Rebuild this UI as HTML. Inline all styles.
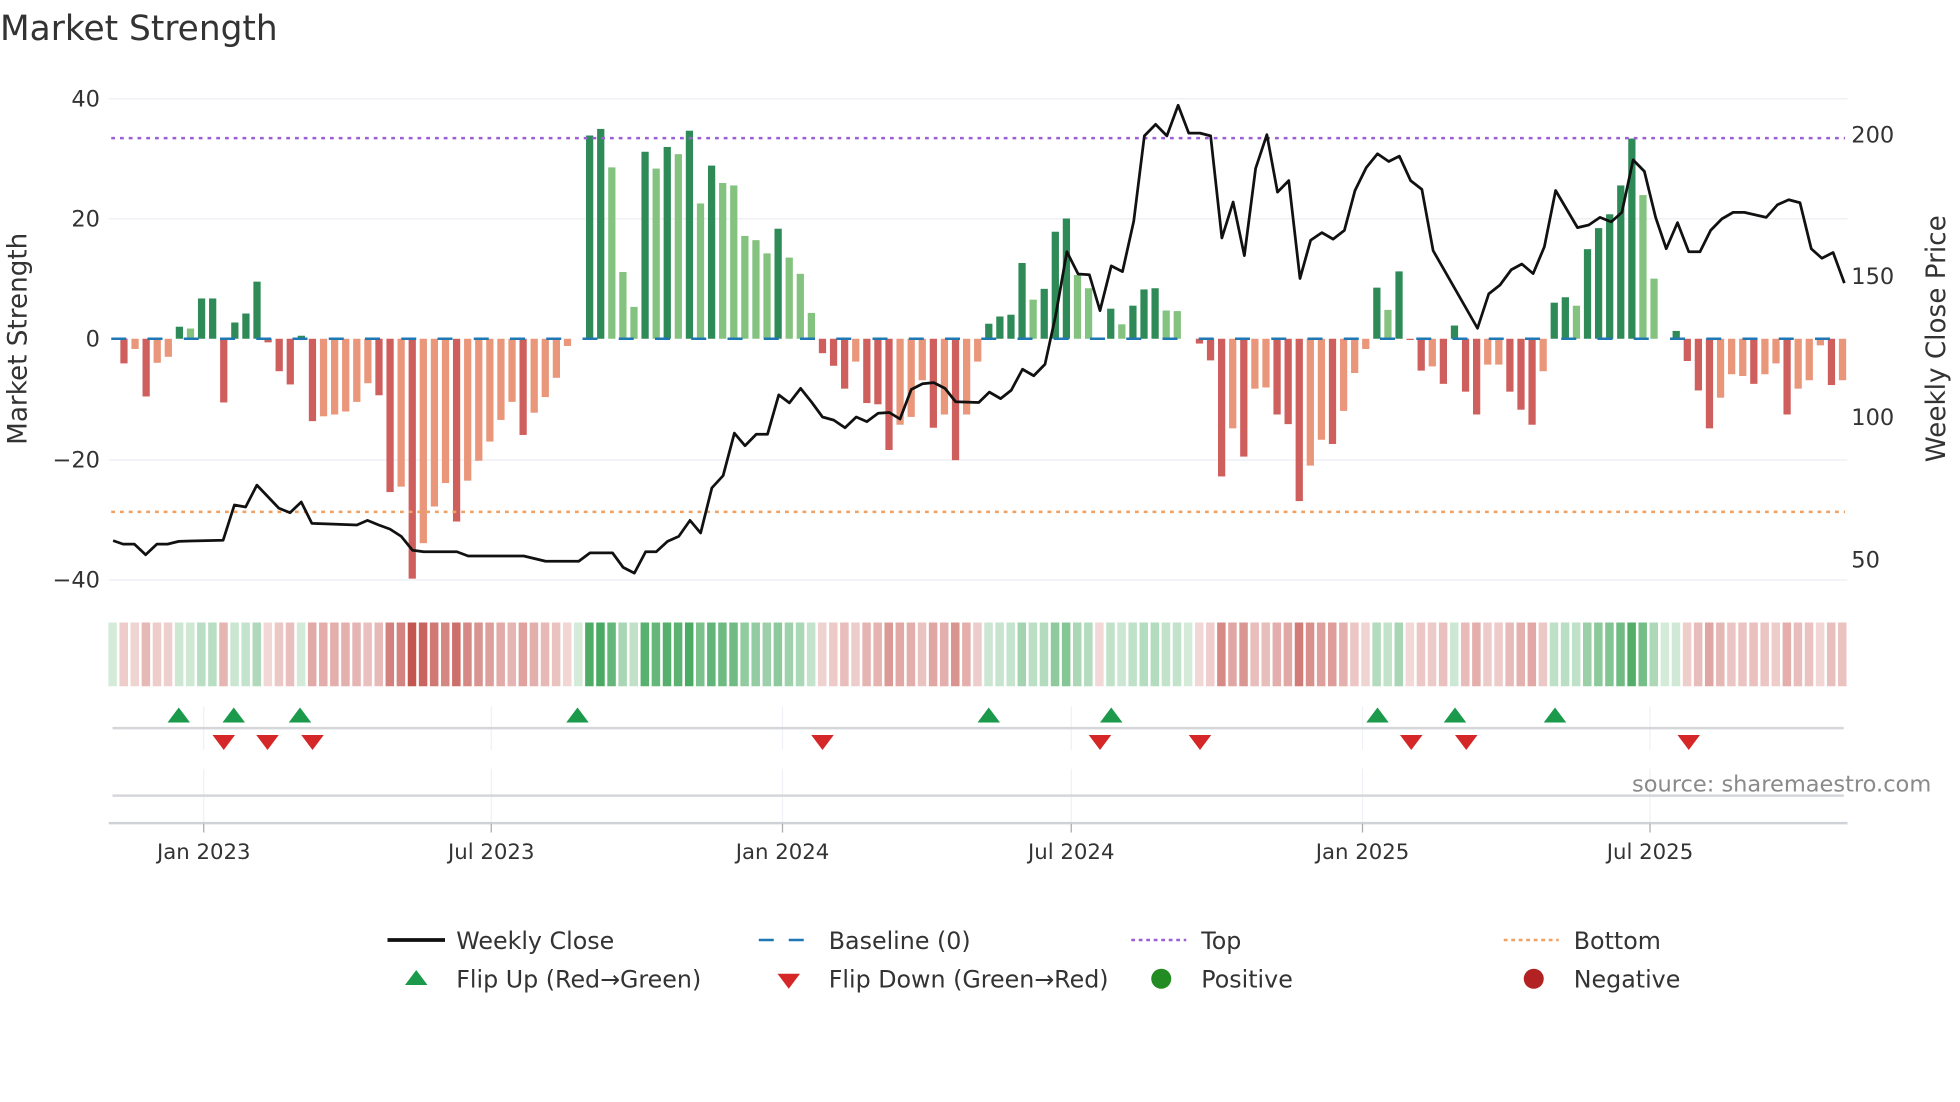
<!DOCTYPE html>
<html><head><meta charset="utf-8"><style>
html,body{margin:0;padding:0;background:#fff;width:1960px;height:1102px;overflow:hidden}
svg{display:block}
text{font-family:"DejaVu Sans","Liberation Sans",sans-serif}
</style></head><body>
<svg id="s" width="1960" height="1102" viewBox="0 0 1568 881.6" xmlns="http://www.w3.org/2000/svg">
<text x="0" y="32" font-size="27.5" fill="#333">Market Strength</text>
<g stroke="#eceef2" stroke-width="1">
<line x1="87" x2="1478" y1="79" y2="79"/><line x1="87" x2="1478" y1="175" y2="175"/>
<line x1="87" x2="1478" y1="368" y2="368"/><line x1="87" x2="1478" y1="464" y2="464"/>
</g>
<g font-size="18" fill="#333" text-anchor="end">
<text x="80" y="85">40</text><text x="80" y="181">20</text><text x="80" y="277">0</text>
<text x="80" y="374">−20</text><text x="80" y="470">−40</text>
</g>
<g font-size="18" fill="#333">
<text x="1481" y="114">200</text><text x="1481" y="227">150</text><text x="1481" y="340">100</text><text x="1481" y="454">50</text>
</g>
<text transform="translate(21,271) rotate(-90)" font-size="21" fill="#333" text-anchor="middle">Market Strength</text>
<text transform="translate(1556,271) rotate(-90)" font-size="21" fill="#333" text-anchor="middle">Weekly Close Price</text>
<g id="bars"></g>
<line x1="89" x2="1476" y1="271" y2="271" stroke="#1f77b4" stroke-width="2" stroke-dasharray="12,17"/>
<line x1="89" x2="1476" y1="110.5" y2="110.5" stroke="#9b5fd6" stroke-width="2" stroke-dasharray="3,4"/>
<line x1="89" x2="1476" y1="409.5" y2="409.5" stroke="#f0a060" stroke-width="2" stroke-dasharray="3,4"/>
<polyline id="price" fill="none" stroke="#111" stroke-width="2.2" stroke-linejoin="round"/>
<g id="heat"></g>
<g stroke="#eef1f5" stroke-width="1">
<line x1="163" x2="163" y1="565" y2="600"/><line x1="393" x2="393" y1="565" y2="600"/><line x1="626" x2="626" y1="565" y2="600"/><line x1="857" x2="857" y1="565" y2="600"/><line x1="1090" x2="1090" y1="565" y2="600"/><line x1="1320" x2="1320" y1="565" y2="600"/>
<line x1="163" x2="163" y1="615" y2="658"/><line x1="393" x2="393" y1="615" y2="658"/><line x1="626" x2="626" y1="615" y2="658"/><line x1="857" x2="857" y1="615" y2="658"/><line x1="1090" x2="1090" y1="615" y2="658"/><line x1="1320" x2="1320" y1="615" y2="658"/>
</g>
<line x1="90" x2="1475" y1="582.5" y2="582.5" stroke="#d4d6da" stroke-width="2"/>
<line x1="90" x2="1475" y1="636.5" y2="636.5" stroke="#d4d6da" stroke-width="2"/>
<line x1="87" x2="1478" y1="658.5" y2="658.5" stroke="#cfd2d6" stroke-width="2"/>
<g stroke="#aaa" stroke-width="1">
<line x1="163" x2="163" y1="659" y2="666"/><line x1="393" x2="393" y1="659" y2="666"/><line x1="626" x2="626" y1="659" y2="666"/><line x1="857" x2="857" y1="659" y2="666"/><line x1="1090" x2="1090" y1="659" y2="666"/><line x1="1320" x2="1320" y1="659" y2="666"/>
</g>
<g id="tri"></g>
<text x="1545" y="633" font-size="18" fill="#8a8a8a" text-anchor="end">source: sharemaestro.com</text>
<g font-size="17" fill="#333" text-anchor="middle">
<text x="163" y="687">Jan 2023</text><text x="393" y="687">Jul 2023</text><text x="626" y="687">Jan 2024</text><text x="857" y="687">Jul 2024</text><text x="1090" y="687">Jan 2025</text><text x="1320" y="687">Jul 2025</text>
</g>
<g font-size="19" fill="#333">
<line x1="310" x2="356" y1="752" y2="752" stroke="#111" stroke-width="3"/><text x="365" y="759">Weekly Close</text>
<line x1="607" x2="651" y1="752" y2="752" stroke="#1f77b4" stroke-width="2" stroke-dasharray="12,12"/><text x="663" y="759">Baseline (0)</text>
<line x1="905" x2="949" y1="752" y2="752" stroke="#9b5fd6" stroke-width="2" stroke-dasharray="3,3"/><text x="961" y="759">Top</text>
<line x1="1203" x2="1247" y1="752" y2="752" stroke="#f0a060" stroke-width="2" stroke-dasharray="3,3"/><text x="1259" y="759">Bottom</text>
<polygon points="324,788 342,788 333,776" fill="#1a9a4a"/><text x="365" y="790">Flip Up (Red→Green)</text>
<polygon points="622,779 640,779 631,791" fill="#d62728"/><text x="663" y="790">Flip Down (Green→Red)</text>
<circle cx="929" cy="783" r="8" fill="#228b22"/><text x="961" y="790">Positive</text>
<circle cx="1227" cy="783" r="8" fill="#b22222"/><text x="1259" y="790">Negative</text>
</g>
</svg>
<script>
var NS="http://www.w3.org/2000/svg";
var v=[0,"-4.1d","-1.7l","-9.6d","-4l","-3l","2d","1.7l","6.7d","6.7d","-10.6d","2.7d","4.2d","9.5d","-0.6d","-5.4d","-7.6d","0.5d","-13.7d","-12.9l","-12.6l","-12.1l","-10.5l","-7.4l","-9.4d","-25.5d","-24.6l","-39.9d","-34l","-27.9l","-24l","-30.4d","-23.6l","-20.3l","-17.1l","-13.5l","-10.5l","-16d","-12.3l","-9.7l","-6.5l","-1.2l","0l","33.8d","34.9d","28.5l","11.1l","5.3l","31.1d","28.3l","31.9d","30.7l","34.6d","22.5l","28.8d","25.9l","25.5l","17.1l","16.4l","14.2l","18.3d","13.5l","10.8l","4.3l","-2.4d","-4.5d","-8.3d","-3.8l","-10.7d","-10.9d","-18.5d","-14.3l","-13l","-6.9l","-14.8d","-12.6l","-20.2d","-12.6l","-3.8l",
"2.5d","3.7d","4d","12.6d","6.5l","8.3d","17.8d","20d","10.6l","8.4l","-0.2d","5d","2.4l","5.5d","8.2d","8.4d","4.7l","4.6l","0l","-0.8d","-3.6d","-22.9d","-14.9l","-19.6d","-8.3l","-8.1l","-12.6d","-14.2d","-27d","-21.1l","-16.8l","-17.5d","-12l","-5.7l","-1.7l","8.5d","4.8l","11.2d","-0.2d","-5.3d","-4.6l","-7.5d","2.2d","-8.8d","-12.6d","-4.3l","-4.3l","-8.8d","-11.8d","-14.3d","-5.4l","6d","6.9d","5.5l","14.9d","18.4d","20.7d","25.5d","33.3d","23.9l","10l","0l","1.3d","-3.7d","-8.6d","-14.9d","-9.8l","-5.9l","-6.2l","-7.5d","-5.9l","-4.1l","-12.6d","-8.3l","-6.9l","-1.1l","-7.7d","-6.9l"];
var bars=document.getElementById("bars"),heat=document.getElementById("heat");
function mix(c,t){return "rgb("+c.map(function(x){return Math.round(255+(x-255)*t)}).join(",")+")";}
for(var i=0;i<v.length;i++){
 var s=""+v[i],val=parseFloat(s),d=s.indexOf("d")>=0,x=90.3+i*8.87;
 if(Math.abs(val)>0.05){
  var r=document.createElementNS(NS,"rect");
  var h=Math.abs(val)*4.81;
  r.setAttribute("x",x-2.9);r.setAttribute("width",5.8);
  r.setAttribute("y",val>0?271-h:271);r.setAttribute("height",h);
  r.setAttribute("fill",val>0?(d?"#2e8a56":"#84c27f"):(d?"#cf5f5d":"#e9967a"));
  bars.appendChild(r);}
 var t=0.22+0.78*Math.min(1,Math.abs(val)/38);
 var c=val>=0?mix([62,164,88],t):mix([196,86,80],t);
 var hr=document.createElementNS(NS,"rect");
 hr.setAttribute("x",x-3.6);hr.setAttribute("width",6.8);hr.setAttribute("y",498);hr.setAttribute("height",51);hr.setAttribute("fill",c);
 heat.appendChild(hr);
}
var p1=[181,1413,197,1422,215,1422,233,1450,251,1422,268,1422,286,1415,304,1414,357,1412,375,1320,393,1325,411,1268,446,1328,464,1340,482,1312,499,1368,517,1369,571,1372,588,1360,606,1372,624,1383,642,1402,660,1438,678,1442,731,1442,749,1453,838,1453,873,1467,926,1467,944,1445,980,1445,997,1483,1015,1498,1033,1442,1050,1442,1068,1415,1086,1402,1104,1360,1121,1393,1139,1275,1157,1243,1175,1132,1192,1165,1210,1135,1228,1135,1246,1032,1263,1053,1281,1015,1299,1052,1316,1090,1334,1098,1352,1118,1370,1090,1387,1102,1405,1080,1423,1078,1440,1095,1458,1018,1476,1003,1494,1000,1512,1015,1529,1050,1566,1052];
var p2=[15,1025,33,1042,50,1020,68,965,86,982,104,952,121,825,139,658,157,716,175,718,192,812,210,695,228,710,246,578,263,355,281,325,299,355,317,275,334,348,352,348,369,355,387,622,405,528,423,668,441,440,459,352,476,502,494,472,512,728,529,628,547,608,565,625,583,602,600,498,618,438,636,402,654,422,671,408,689,472,707,495,725,655,796,858,814,768,832,745,850,705,867,690,885,715,903,645,921,498,956,595,974,588,992,568,1010,580,1027,555,1045,418,1063,448,1081,568,1098,650,1116,582,1134,658,1152,658,1169,602,1187,572,1205,555,1223,555,1258,568,1276,535,1294,522,1312,530,1330,650,1347,675,1365,660,1383,740];
var pts=[];
for(var k=0;k<p1.length;k+=2)pts.push((p1[k]/2).toFixed(1)+","+(p1[k+1]/3.267).toFixed(1));
for(var k=0;k<p2.length;k+=2)pts.push((784+p2[k]/2).toFixed(1)+","+(p2[k+1]/3.267).toFixed(1));
document.getElementById("price").setAttribute("points",pts.join(" "));
var tri=document.getElementById("tri");
[143,187,240,462,791,889,1102,1164,1244].forEach(function(x){var p=document.createElementNS(NS,"polygon");p.setAttribute("points",(x-9)+",578 "+(x+9)+",578 "+x+",566");p.setAttribute("fill","#1a9a4a");tri.appendChild(p);});
[179,214,250,658,880,960,1129,1173,1351].forEach(function(x){var p=document.createElementNS(NS,"polygon");p.setAttribute("points",(x-9)+",588 "+(x+9)+",588 "+x+",600");p.setAttribute("fill","#d62728");tri.appendChild(p);});
</script>
</body></html>
